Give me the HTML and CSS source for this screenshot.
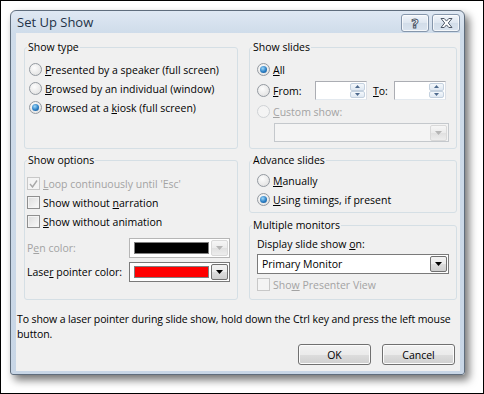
FILE: index.html
```html
<!DOCTYPE html>
<html lang="en">
<head>
  <meta charset="UTF-8">
  <meta name="viewport" content="width=device-width, initial-scale=1.0">
  <title>Set Up Show</title>
  <link rel="stylesheet" href="styles.css">
</head>
<body>
  <div class="window">
    <div class="titlebar">
      <span class="title">Set Up Show</span>
      <div class="caption">
        <span class="caption-btn help">?</span>
        <span class="caption-btn close">
          <svg width="13" height="10" viewBox="0 0 13 10"><path d="M1 0.5h3.2l2.3 2.6 2.3-2.6H12L8.3 5 12 9.5H8.8L6.5 6.9 4.2 9.5H1L4.7 5z" fill="#fff" stroke="#4d5868" stroke-width="1"/></svg>
        </span>
      </div>
    </div>

    <div class="client">
      <div class="groups">
        <div class="col">
          <fieldset class="group group-type">
            <legend>Show type</legend>
            <div class="rows">
              <label class="row"><span class="radio"></span><span><u>P</u>resented by a speaker (full screen)</span></label>
              <label class="row"><span class="radio"></span><span><u>B</u>rowsed by an individual (window)</span></label>
              <label class="row"><span class="radio checked"></span><span>Browsed at a <u>k</u>iosk (full screen)</span></label>
            </div>
          </fieldset>

          <fieldset class="group group-options">
            <legend>Show options</legend>
            <div class="rows">
              <label class="row disabled"><span class="check checked"><svg width="9" height="8" viewBox="0 0 9 8"><path d="M1 4l2.5 3L8 0.5" fill="none" stroke="#a8a8a8" stroke-width="1.4"/></svg></span><span><u>L</u>oop continuously until 'Esc'</span></label>
              <label class="row"><span class="check"></span><span>Show without <u>n</u>arration</span></label>
              <label class="row"><span class="check"></span><span><u>S</u>how without animation</span></label>
              <div class="color-row pen disabled">
                <span class="color-label">P<u>e</u>n color:</span>
                <span class="color-pick">
                  <span class="swatch black"></span>
                  <span class="drop-btn"><svg width="7" height="4" viewBox="0 0 7 4"><path d="M0 0h7L3.5 4z" fill="#b5b5b5"/></svg></span>
                </span>
              </div>
              <div class="color-row laser">
                <span class="color-label">Lase<u>r</u> pointer color:</span>
                <span class="color-pick active">
                  <span class="swatch red"></span>
                  <span class="drop-btn"><svg width="7" height="4" viewBox="0 0 7 4"><path d="M0 0h7L3.5 4z" fill="#000"/></svg></span>
                </span>
              </div>
            </div>
          </fieldset>
        </div>

        <div class="col">
          <fieldset class="group group-slides">
            <legend>Show slides</legend>
            <div class="rows">
              <label class="row"><span class="radio checked"></span><span><u>A</u>ll</span></label>
              <div class="row from-row">
                <span class="radio"></span><span class="from-label"><u>F</u>rom:</span>
                <span class="spin">
                  <span class="spin-btns">
                    <span class="spin-btn"><svg width="5" height="3" viewBox="0 0 5 3"><path d="M0 3L2.5 0 5 3z" fill="#4e6a8e"/></svg></span>
                    <span class="spin-btn"><svg width="5" height="3" viewBox="0 0 5 3"><path d="M0 0h5L2.5 3z" fill="#4e6a8e"/></svg></span>
                  </span>
                </span>
                <span class="to-label"><u>T</u>o:</span>
                <span class="spin">
                  <span class="spin-btns">
                    <span class="spin-btn"><svg width="5" height="3" viewBox="0 0 5 3"><path d="M0 3L2.5 0 5 3z" fill="#4e6a8e"/></svg></span>
                    <span class="spin-btn"><svg width="5" height="3" viewBox="0 0 5 3"><path d="M0 0h5L2.5 3z" fill="#4e6a8e"/></svg></span>
                  </span>
                </span>
              </div>
              <label class="row disabled"><span class="radio"></span><span><u>C</u>ustom show:</span></label>
              <div class="combo custom disabled">
                <span class="combo-text"></span>
                <span class="drop-btn"><svg width="7" height="4" viewBox="0 0 7 4"><path d="M0 0h7L3.5 4z" fill="#b5b5b5"/></svg></span>
              </div>
            </div>
          </fieldset>

          <fieldset class="group group-advance">
            <legend>Advance slides</legend>
            <div class="rows">
              <label class="row"><span class="radio"></span><span><u>M</u>anually</span></label>
              <label class="row"><span class="radio checked"></span><span><u>U</u>sing timings, if present</span></label>
            </div>
          </fieldset>

          <fieldset class="group group-monitors">
            <legend>Multiple monitors</legend>
            <div class="rows">
              <div class="row label-row"><span>Display slide show <u>o</u>n:</span></div>
              <div class="combo monitor">
                <span class="combo-text">Primary Monitor</span>
                <span class="drop-btn"><svg width="7" height="4" viewBox="0 0 7 4"><path d="M0 0h7L3.5 4z" fill="#000"/></svg></span>
              </div>
              <label class="row disabled"><span class="check"></span><span>Sho<u>w</u> Presenter View</span></label>
            </div>
          </fieldset>
        </div>
      </div>

      <p class="hint">To show a laser pointer during slide show, hold down the Ctrl key and press the left mouse button.</p>

      <div class="actions">
        <button class="btn">OK</button>
        <button class="btn">Cancel</button>
      </div>
    </div>
  </div>
</body>
</html>
```

FILE: styles.css
```css
*, *:before, *:after { box-sizing: border-box; }
html, body {
  margin: 0;
  padding: 0;
}
body {
  width: 484px;
  height: 394px;
  overflow: hidden;
  border: 1px solid #000;
  padding: 9px 0 0 9px;
  background-color: #fff;
  font-family: "Open Sans", "Noto Sans", sans-serif;
  font-size: 10.5px;
  color: #000;
}

/* window frame */
.window {
  width: 455px;
  height: 365px;
  display: flex;
  flex-direction: column;
  padding: 0 4px 3px 5px;
  border: 1px solid #5f6d7d;
  border-radius: 6px 6px 3px 3px;
  background: linear-gradient(#dfe8f3, #cfdcea 22px, #c8d6e6);
  box-shadow: 4px 5px 9px rgba(0, 0, 0, 0.55);
}
.titlebar {
  height: 22px;
  display: flex;
  align-items: center;
  justify-content: space-between;
}
.title {
  margin-left: 1px;
  font-size: 13px;
  color: #233247;
}
.caption { display: flex; gap: 3px; margin-top: 2px; }
.caption-btn {
  width: 28px;
  height: 18px;
  display: flex;
  align-items: center;
  justify-content: center;
  border: 1px solid #8596ab;
  border-radius: 3px;
  background: linear-gradient(#f1f5fa, #dde6f0 50%, #d2dde9 51%, #dae4ef);
  box-shadow: inset 0 0 0 1px rgba(255, 255, 255, 0.7);
}
.caption-btn.help {
  font-family: "DejaVu Sans", sans-serif;
  font-weight: bold;
  font-size: 13px;
  color: #fff;
  -webkit-text-stroke: 1px #4d5868;
}

.client {
  flex: 1;
  padding: 7px 2px 0 1px;
  background-color: #f0f0f0;
}

/* group boxes */
.groups {
  display: grid;
  grid-template-columns: 214px 208px;
  column-gap: 11px;
  margin-left: 7px;
}
.col { display: flex; flex-direction: column; }
.group {
  margin: 0;
  padding: 0 0 0 2px;
  border: 1px solid #d5dfe5;
  border-radius: 3px;
}
.group legend {
  padding: 0 1px;
  line-height: 14px;
}
.group-type { height: 109px; }
.group-options { height: 147px; margin-top: 4px; }
.group-slides { height: 109px; }
.group-advance { height: 60px; margin-top: 4px; }
.group-monitors { height: 82px; margin-top: 5px; }

.rows { display: flex; flex-direction: column; }
.group-type .rows { padding: 6px 0 0 2px; }
.group-options .rows { padding: 7px 0 0 0; }
.group-slides .rows { padding: 6px 0 0 5px; }
.group-advance .rows { padding: 4px 0 0 5px; }
.group-monitors .rows { padding: 3px 0 0 5px; }

.row {
  height: 19px;
  display: flex;
  align-items: center;
  white-space: nowrap;
}
.disabled { color: #a3a3a3; }

/* radio and check */
.radio {
  width: 13px;
  height: 13px;
  margin-right: 3px;
  flex: none;
  position: relative;
  border: 1px solid #949aa1;
  border-radius: 50%;
  background: radial-gradient(circle at 40% 35%, #fdfdfd, #dcdcdc);
}
.radio.checked:after {
  content: "";
  position: absolute;
  left: 2px;
  top: 2px;
  width: 7px;
  height: 7px;
  border-radius: 50%;
  background: radial-gradient(circle at 40% 35%, #9fd8f8, #2a7ec4 55%, #114d86);
}
.disabled .radio { border-color: #cfd2d5; background: #f4f4f4; }

.check {
  width: 13px;
  height: 13px;
  margin-right: 3px;
  flex: none;
  display: flex;
  align-items: center;
  justify-content: center;
  border: 1px solid #8f8f8f;
  background: linear-gradient(135deg, #dcdcdc, #fafafa);
  box-shadow: inset 0 0 0 1px #f4f4f4;
}
.disabled .check { border-color: #c8c8c8; background: #f4f4f4; box-shadow: none; }

/* colour pickers */
.color-row {
  height: 20px;
  display: flex;
  align-items: center;
  justify-content: space-between;
  padding-right: 7px;
}
.color-row.pen { margin-top: 7px; }
.color-row.laser { margin-top: 4px; }
.color-pick {
  width: 101px;
  height: 20px;
  display: flex;
  align-items: center;
  padding: 2px 1px 2px 4px;
  border: 1px solid #b6b6b6;
  background-color: #fff;
}
.color-pick.active { border-color: #7a7a7a; }
.swatch { flex: 1; height: 12px; margin-right: 2px; border: 1px solid #808080; }
.swatch.black { background-color: #000; }
.swatch.red { background-color: #f00; }

.drop-btn {
  width: 17px;
  height: 16px;
  flex: none;
  display: flex;
  align-items: center;
  justify-content: center;
  border: 1px solid #d9d9d9;
  border-radius: 2px;
  background: linear-gradient(#f6f6f6, #ebebeb 50%, #e0e0e0 51%, #ededed);
}
.active .drop-btn, .monitor .drop-btn { border-color: #707070; background: linear-gradient(#f2f2f2, #ebebeb 50%, #dddddd 51%, #cfcfcf); }

/* spin boxes */
.from-row { height: 19px; margin-top: 2px; }
.from-label { width: 42px; }
.to-label { margin: 0 6px 0 6px; }
.spin {
  width: 52px;
  height: 19px;
  display: flex;
  justify-content: flex-end;
  padding: 1px;
  border: 1px solid #abadb3;
  border-right-color: #dbdfe6;
  border-bottom-color: #e3e9ef;
  background-color: #fff;
}
.spin-btns { width: 15px; display: flex; flex-direction: column; }
.spin-btn {
  flex: 1;
  display: flex;
  align-items: center;
  justify-content: center;
  border: 1px solid #c4d1df;
  border-radius: 2px;
  background: linear-gradient(#f4f8fc, #dfe8f2);
}
.group-slides .disabled { margin-top: 2px; }

/* combos */
.combo {
  height: 20px;
  display: flex;
  align-items: center;
  padding: 1px;
  border: 1px solid #7a7a7a;
  background-color: #fff;
}
.combo-text { flex: 1; padding-left: 3px; white-space: nowrap; }
.combo.custom {
  width: 175px;
  height: 19px;
  margin: 2px 0 0 17px;
  border-color: #c4c8cc;
  background-color: #f4f4f4;
}
.combo.monitor { width: 192px; margin-top: 1px; }
.label-row { height: 18px; }
.group-monitors .disabled { margin-top: 1px; }

/* footer */
.hint {
  margin: 12px 0 0 0;
  line-height: 15px;
  letter-spacing: -0.1px;
}
.actions {
  display: flex;
  justify-content: flex-end;
  gap: 11px;
  margin: 2px 3px 0 0;
}
.btn {
  width: 73px;
  height: 21px;
  padding: 0;
  border: 1px solid #707070;
  border-radius: 3px;
  background: linear-gradient(#f2f2f2, #ebebeb 50%, #dddddd 51%, #cfcfcf);
  box-shadow: inset 0 0 0 1px #fcfcfc;
  font-family: inherit;
  font-size: 10.5px;
  color: #000;
}
```
